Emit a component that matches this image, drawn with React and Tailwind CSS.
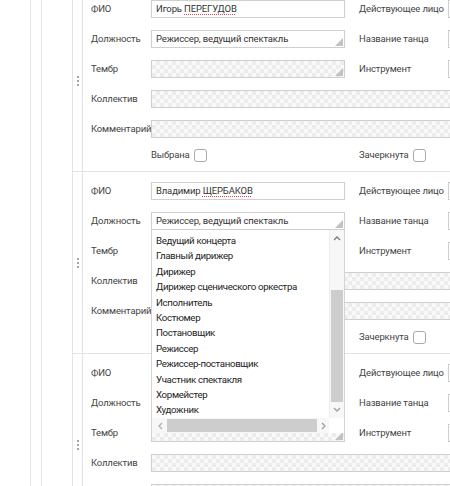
import React from "react";

const checker =
  "bg-[image:repeating-conic-gradient(#ececec_0%_25%,#f9f9f9_0%_50%)] bg-size-[8px_8px]";

function Grip() {
  return (
    <svg className="absolute right-[1px] bottom-[1px]" width="8" height="8" viewBox="0 0 8 8">
      <polygon points="8,0 8,8 0,8" fill="#c2c2c2" />
    </svg>
  );
}

function Field({ children, className = "", grip = false, empty = false }) {
  return (
    <div
      className={`relative h-[18px] border border-[#cfcfcf] flex items-center pl-[4px] text-[#333] whitespace-nowrap ${
        empty ? checker : "bg-white"
      } ${className}`}
    >
      {children}
      {grip && <Grip />}
    </div>
  );
}

function Label({ children, w = "w-[60px]", className = "" }) {
  return <div className={`${w} shrink-0 text-[#444] whitespace-nowrap ${className}`}>{children}</div>;
}

function Checkbox() {
  return <span className="inline-block w-[13px] h-[13px] rounded-[3px] border border-[#a9a9a9] bg-white" />;
}

const roles = [
  "Ведущий концерта",
  "Главный дирижер",
  "Дирижер",
  "Дирижер сценического оркестра",
  "Исполнитель",
  "Костюмер",
  "Постановщик",
  "Режиссер",
  "Режиссер-постановщик",
  "Участник спектакля",
  "Хормейстер",
  "Художник",
];

function Dropdown() {
  return (
    <div className="absolute left-0 top-full z-10 w-[194px] h-[203px] bg-white border-l border-r border-[#d4d4d4] overflow-hidden text-[9.7px] tracking-[-0.35px] text-[#222]">
      <div className="pt-[3px] pl-[4px]">
        {roles.map((r) => (
          <div key={r} className="h-[15.4px] leading-[15.4px] whitespace-nowrap">
            {r}
          </div>
        ))}
      </div>
      {/* vertical scrollbar */}
      <div className="absolute right-0 top-0 w-[15px] h-[188px] bg-[#f7f7f7] border-l border-[#ececec] flex flex-col">
        <div className="h-[15px] flex items-center justify-center">
          <svg width="8" height="6" viewBox="0 0 8 6">
            <path d="M1 5 L4 2 L7 5" stroke="#7a7a7a" strokeWidth="1.3" fill="none" />
          </svg>
        </div>
        <div className="h-[45px]" />
        <div className="h-[112px] bg-[#cdcdcd] mx-[1px]" />
        <div className="h-[15px] flex items-center justify-center">
          <svg width="8" height="6" viewBox="0 0 8 6">
            <path d="M1 1 L4 4 L7 1" stroke="#a0a0a0" strokeWidth="1.3" fill="none" />
          </svg>
        </div>
      </div>
      {/* horizontal scrollbar */}
      <div className="absolute left-0 bottom-0 w-[178px] h-[15px] bg-[#f7f7f7] flex items-center">
        <div className="w-[15px] h-full flex items-center justify-center">
          <svg width="6" height="8" viewBox="0 0 6 8">
            <path d="M5 1 L2 4 L5 7" stroke="#b0b0b0" strokeWidth="1.3" fill="none" />
          </svg>
        </div>
        <div className="w-[150px] h-[13px] bg-[#cdcdcd]" />
        <div className="w-[13px] h-full flex items-center justify-center">
          <svg width="6" height="8" viewBox="0 0 6 8">
            <path d="M1 1 L4 4 L1 7" stroke="#a0a0a0" strokeWidth="1.3" fill="none" />
          </svg>
        </div>
      </div>
      <div className="absolute right-0 bottom-0 w-[15px] h-[15px] bg-white" />
    </div>
  );
}

function Block({ fio, surname, role, roleState, open }) {
  return (
    <div className="flex border-l border-b border-[#e3e3e3]">
      {/* drag handle */}
      <div className="w-[10px] shrink-0 border-r border-[#e3e3e3] flex flex-col items-center justify-center gap-[2px]">
        <span className="w-[2px] h-[2px] bg-[#888] rounded-full" />
        <span className="w-[2px] h-[2px] bg-[#888] rounded-full" />
        <span className="w-[2px] h-[2px] bg-[#888] rounded-full" />
      </div>
      <div className="flex-1 pl-[8px] pt-[10px] pb-[9px] flex flex-col">
        <div className="flex flex-col gap-[12px]">
          <div className="flex items-center">
            <Label>ФИО</Label>
            <Field className="w-[194px]">
              {fio}&nbsp;
              <span className="underline decoration-dotted decoration-[#e04848] underline-offset-2">{surname}</span>
            </Field>
            <Label w="w-[89px]" className="ml-[14px]">Действующее лицо</Label>
            <Field className="w-[200px]" />
          </div>
          <div className="flex items-center">
            <Label>Должность</Label>
            <div className="relative">
              <Field
                grip
                className={`w-[194px] ${
                  roleState === "ok"
                    ? "border-[#8fcf98] bg-[#f1faf2]"
                    : "border-[#3f7fc8]"
                }`}
              >
                {role}
              </Field>
              {open && <Dropdown />}
            </div>
            <Label w="w-[89px]" className="ml-[14px]">Название танца</Label>
            <Field className="w-[200px]" />
          </div>
          <div className="flex items-center">
            <Label>Тембр</Label>
            <Field empty grip className="w-[194px]" />
            <Label w="w-[89px]" className="ml-[14px]">Инструмент</Label>
            <Field className="w-[200px]" />
          </div>
          <div className="flex items-center">
            <Label>Коллектив</Label>
            <Field empty className="flex-1" />
          </div>
          <div className="flex items-center">
            <Label>Комментарий</Label>
            <Field empty className="flex-1" />
          </div>
        </div>
        <div className="flex items-center h-[13px] mt-[11px]">
          <div className="w-[60px]" />
          <div className="w-[194px] flex items-center gap-[4px]">
            <span className="text-[#444]">Выбрана</span>
            <Checkbox />
          </div>
          <div className="ml-[14px] flex items-center gap-[4px]">
            <span className="text-[#444]">Зачеркнута</span>
            <Checkbox />
          </div>
        </div>
      </div>
    </div>
  );
}

export default function App() {
  return (
    <div className="w-[450px] h-[486px] overflow-hidden bg-white font-['Roboto',Arial,sans-serif] text-[9.5px] tracking-[-0.15px]">
      <div className="-mt-[10px] ml-[30px] border-l border-[#e6e6e6] pl-[10px] w-[700px] min-h-[600px]">
        <div className="border-l border-[#e6e6e6] pl-[30px] min-h-[600px]">
          <Block fio="Игорь" surname="ПЕРЕГУДОВ" role="Режиссер, ведущий спектакль" roleState="ok" />
          <Block fio="Владимир" surname="ЩЕРБАКОВ" role="Режиссер, ведущий спектакль" roleState="focus" open />
          <Block fio="" surname="" role="" roleState="none" />
        </div>
      </div>
    </div>
  );
}
